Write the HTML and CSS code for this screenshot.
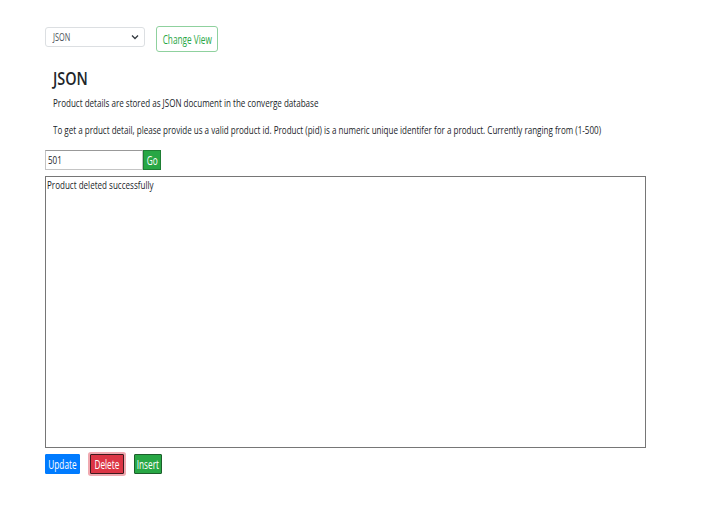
FILE: index.html
```html
<!DOCTYPE html>
<html>
<head>
<meta charset="utf-8">
<link rel="stylesheet" href="styles.css">
</head>
<body>
<div class="page">
  <div class="toolbar">
    <div class="select">
      <span class="sq">JSON</span>
      <svg class="chev" width="8" height="6" viewBox="0 0 8 6"><path d="M1 1.5 L4 4.5 L7 1.5" fill="none" stroke="#343a40" stroke-width="1.3"/></svg>
    </div>
    <button class="btn-outline"><span class="sq mid">Change View</span></button>
  </div>
  <div class="intro">
    <h1 class="title"><span class="sq">JSON</span></h1>
    <p class="text p1"><span class="sq">Product details are stored as JSON document in the converge database</span></p>
    <p class="text p2"><span class="sq">To get a prduct detail, please provide us a valid product id. Product (pid) is a numeric unique identifer for a product. Currently ranging from (1-500)</span></p>
  </div>
  <div class="search">
    <div class="input"><span class="sq">501</span></div>
    <button class="btn go"><span class="sq mid">Go</span></button>
  </div>
  <div class="output"><span class="sq">Product deleted successfully</span></div>
  <div class="actions">
    <button class="btn update"><span class="sq mid">Update</span></button>
    <button class="btn delete"><span class="sq mid">Delete</span></button>
    <button class="btn insert"><span class="sq mid">Insert</span></button>
  </div>
</div>
</body>
</html>
```
FILE: styles.css
```css
* { box-sizing: border-box; }
body {
  margin: 0;
  background: #fff;
  font-family: "Open Sans", "Noto Sans", sans-serif;
  color: #212529;
}
.sq {
  display: inline-block;
  white-space: nowrap;
  transform: scaleX(0.7);
  transform-origin: left center;
}
.sq.mid {
  transform: scaleX(0.66);
  transform-origin: center center;
}
.page {
  padding: 26px 0 0 45px;
  width: 647px;
  overflow: hidden;
}
.toolbar {
  display: flex;
  align-items: flex-start;
  gap: 11px;
  height: 26px;
}
.select {
  margin-top: 1px;
  width: 100px;
  height: 20px;
  border: 1px solid #dcdfe2;
  border-radius: 3px;
  display: flex;
  align-items: center;
  justify-content: space-between;
  padding: 0 5px 0 7px;
  font-size: 10.5px;
  color: #495057;
}
.btn-outline {
  height: 26px;
  width: 62px;
  padding: 0;
  border: 1px solid #8fd19e;
  border-radius: 3px;
  background: #fff;
  color: #28a745;
  font-family: inherit;
  font-size: 12.5px;
  display: flex;
  align-items: center;
  justify-content: center;
}
.intro {
  padding-left: 8px;
  overflow: hidden;
}
.title {
  margin: 15px 0 0;
  font-size: 18px;
  font-weight: 600;
  line-height: 22px;
  color: #212529;
}
.title .sq { transform: scaleX(0.8); }
.text {
  margin: 0;
  font-size: 11.5px;
  line-height: 14px;
  color: #212529;
}
.p1 { margin-top: 7px; }
.p2 { margin-top: 13px; }
.search {
  display: flex;
  margin-top: 13px;
}
.input {
  width: 98px;
  height: 20px;
  border: 1px solid #c4c4c4;
  border-top-color: #999;
  font-size: 11.5px;
  line-height: 18px;
  padding-left: 2px;
}
.btn {
  font-family: inherit;
  border: 1px solid transparent;
  color: #fff;
  padding: 0;
  height: 20px;
  font-size: 12.5px;
  display: flex;
  align-items: center;
  justify-content: center;
}
.go {
  width: 18px;
  background: #28a745;
  border-color: #1e7e34;
  border-radius: 0;
}
.output {
  margin-top: 6px;
  width: 601px;
  height: 272px;
  border: 1px solid #767676;
  font-size: 11.5px;
  line-height: 14px;
  padding: 1px 0 0 1px;
}
.actions {
  display: flex;
  align-items: center;
  gap: 10px;
  margin-top: 4px;
  padding: 2px 0 4px 0;
}
.update {
  width: 35px;
  background: #007bff;
  border-color: #007bff;
  border-radius: 1px;
}
.delete {
  width: 34px;
  background: #dc3545;
  border-color: #3d1a1e;
  border-radius: 1px;
  box-shadow: 0 0 0 2px rgba(225, 83, 97, 0.5);
}
.insert {
  width: 28px;
  background: #28a745;
  border-color: #1c5e2b;
  border-radius: 1px;
}
```
